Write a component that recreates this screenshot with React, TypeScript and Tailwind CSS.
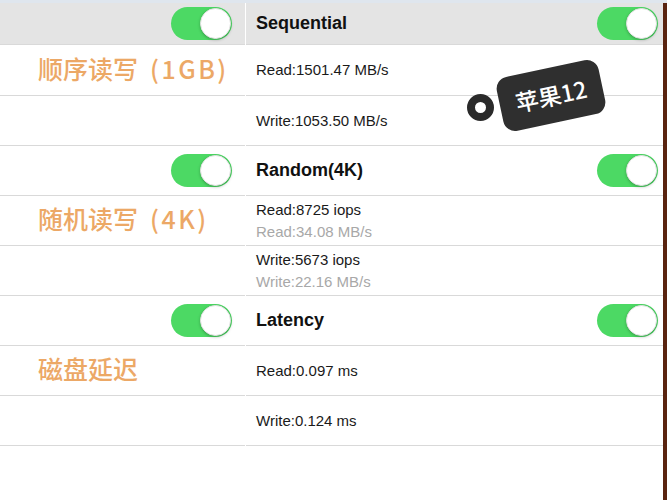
const latin = "font-['Liberation_Sans','Noto_Sans_CJK_SC',sans-serif]";
const cjk = "font-['Noto_Sans_CJK_SC',sans-serif]";

function Toggle() {
	return (
		<div className="relative w-[61px] h-[33px] rounded-full bg-[#4cd964]">
			<div className="absolute right-[1px] top-[1px] w-[31px] h-[31px] rounded-full bg-white shadow-[0_1px_3px_rgba(0,0,0,0.25)] border border-[#e2e2e2]" />
		</div>
	);
}

type LeftRow = { kind: 'toggle' | 'label' | 'empty'; text?: string; tag?: string; gray?: boolean; h: string };

const leftRows: LeftRow[] = [
	{ kind: 'toggle', gray: true, h: 'h-[42px]' },
	{ kind: 'label', text: '顺序读写', tag: '(1GB)', h: 'h-[51px]' },
	{ kind: 'empty', h: 'h-[50px]' },
	{ kind: 'toggle', h: 'h-[50px]' },
	{ kind: 'label', text: '随机读写', tag: '(4K)', h: 'h-[50px]' },
	{ kind: 'empty', h: 'h-[50px]' },
	{ kind: 'toggle', h: 'h-[50px]' },
	{ kind: 'label', text: '磁盘延迟', h: 'h-[50px]' },
	{ kind: 'empty', h: 'h-[50px]' },
];

type RightRow =
	| { kind: 'header'; title: string; gray?: boolean; h: string }
	| { kind: 'value'; main: string; sub?: string; h: string };

const rightRows: RightRow[] = [
	{ kind: 'header', title: 'Sequential', gray: true, h: 'h-[42px]' },
	{ kind: 'value', main: 'Read:1501.47 MB/s', h: 'h-[51px]' },
	{ kind: 'value', main: 'Write:1053.50 MB/s', h: 'h-[50px]' },
	{ kind: 'header', title: 'Random(4K)', h: 'h-[50px]' },
	{ kind: 'value', main: 'Read:8725 iops', sub: 'Read:34.08 MB/s', h: 'h-[50px]' },
	{ kind: 'value', main: 'Write:5673 iops', sub: 'Write:22.16 MB/s', h: 'h-[50px]' },
	{ kind: 'header', title: 'Latency', h: 'h-[50px]' },
	{ kind: 'value', main: 'Read:0.097 ms', h: 'h-[50px]' },
	{ kind: 'value', main: 'Write:0.124 ms', h: 'h-[50px]' },
];

export default function App() {
	return (
		<div className="relative w-[667px] h-[500px] overflow-hidden bg-white flex flex-col">
			<div className="h-[3px] bg-[#dfe6ee]" />
			<div className="flex flex-1">
				{/* left screenshot */}
				<div className="w-[245px] flex flex-col">
					{leftRows.map((row, i) => (
						<div
							key={i}
							className={`${row.h} shrink-0 border-b border-[#d9d9d9] flex items-center ${
								row.gray ? 'bg-[#e4e4e4]' : 'bg-white'
							} ${row.kind === 'toggle' ? 'justify-end pr-[13px]' : 'pl-[38px]'}`}
						>
							{row.kind === 'toggle' && <Toggle />}
							{row.kind === 'label' && (
								<span className={`${cjk} text-[25px] font-medium text-[#eca866] leading-none -mt-[4px] flex items-baseline`}>
									{row.text}
									{row.tag && <span className="ml-[12px] tracking-[2.5px]">{row.tag}</span>}
								</span>
							)}
						</div>
					))}
				</div>

				<div className="w-[1px]" />

				{/* right screenshot */}
				<div className={`flex-1 flex flex-col ${latin}`}>
					{rightRows.map((row, i) =>
						row.kind === 'header' ? (
							<div
								key={i}
								className={`${row.h} shrink-0 border-b border-[#d9d9d9] flex items-center justify-between pl-[10px] pr-[5px] ${
									row.gray ? 'bg-[#e4e4e4]' : 'bg-white'
								}`}
							>
								<span className="text-[18px] font-bold text-[#111]">{row.title}</span>
								<Toggle />
							</div>
						) : (
							<div
								key={i}
								className={`${row.h} shrink-0 border-b border-[#d9d9d9] flex flex-col justify-center pl-[10px]`}
							>
								<span className="text-[15px] leading-[22px] text-[#1a1a1a]">{row.main}</span>
								{row.sub && (
									<span className="text-[15px] leading-[22px] text-[#a8a8a8]">{row.sub}</span>
								)}
							</div>
						)
					)}
				</div>

				<div className="w-[4px] bg-[#5a2410]" />
			</div>

			{/* sticker */}
			<div className="absolute left-[467px] top-[94px] w-[27px] h-[27px] rounded-full border-[8px] border-[#2a2a2a] bg-white" />
			<div className="absolute left-[499px] top-[68px] w-[104px] h-[55px] rounded-[12px] bg-[#2f2f2f] -rotate-[12deg] flex items-center justify-center">
				<span className={`${cjk} text-white text-[23px] font-medium`}>苹果12</span>
			</div>
		</div>
	);
}
